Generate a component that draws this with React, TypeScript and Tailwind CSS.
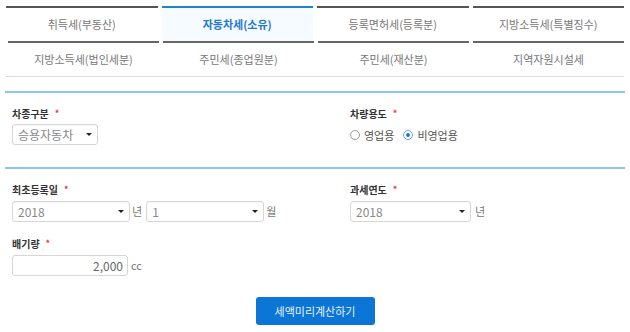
import React from "react";

const font = { fontFamily: '"Noto Sans CJK KR", "Noto Sans", sans-serif' };

const topTabs = ["취득세(부동산)", "자동차세(소유)", "등록면허세(등록분)", "지방소득세(특별징수)"];
const bottomTabs = ["지방소득세(법인세분)", "주민세(종업원분)", "주민세(재산분)", "지역자원시설세"];

const Caret = () => (
  <span className="h-0 w-0 border-x-[3px] border-t-[3px] border-x-transparent border-t-[#222]" />
);

const SelectBox = ({ value, width }: { value: string; width: string }) => (
  <div
    className={`flex h-[21px] ${width} items-center justify-between rounded-[3px] border border-[#d6d6d6] bg-white pl-[5px] pr-[5px] text-[12px] text-[#888] shadow-[inset_0_1px_1px_rgba(0,0,0,0.04)]`}
  >
    <span>{value}</span>
    <Caret />
  </div>
);

const Label = ({ children }: { children: React.ReactNode }) => (
  <div className="flex items-center gap-[6px] text-[10px] font-bold leading-[14px] text-[#333]">
    {children}
    <span className="text-[9px] text-[#e53935]">*</span>
  </div>
);

const Radio = ({ checked, label }: { checked?: boolean; label: string }) => (
  <label className="flex items-center gap-[4px] text-[11px] text-[#555]">
    <span
      className={`flex h-[10px] w-[10px] items-center justify-center rounded-full border ${checked ? "border-[#7aa6d6]" : "border-[#999]"} bg-white`}
    >
      {checked && <span className="h-[4px] w-[4px] rounded-full bg-[#1a7fe0]" />}
    </span>
    {label}
  </label>
);

export default function App() {
  return (
    <div className="h-[332px] w-[630px] bg-white" style={font}>
      <div className="px-[6px] pt-[6px]">
        <div className="grid grid-cols-4 gap-x-[4px]">
          {topTabs.map((t, i) =>
            i === 1 ? (
              <div
                key={t}
                className="flex h-[35px] items-center justify-center border-t-2 border-[#1f82d6] bg-[#f6fbff] text-[11px] font-bold text-[#1f7ad0]"
              >
                {t}
              </div>
            ) : (
              <div
                key={t}
                className="flex h-[35px] items-center justify-center border-t-2 border-[#555] text-[11px] text-[#777]"
              >
                {t}
              </div>
            )
          )}
        </div>
        <div className="grid grid-cols-4 gap-x-[4px] border-b border-[#dcdcdc] pl-[2px]">
          {bottomTabs.map((t) => (
            <div
              key={t}
              className="flex h-[35px] items-center justify-center border-t-2 border-[#666] text-[11px] text-[#777]"
            >
              {t}
            </div>
          ))}
        </div>
      </div>

      <div className="mx-[5px] mt-[14px] border-t-2 border-[#8cc4f2]">
        <div className="flex pt-[14px] pb-[22px] pl-[7px]">
          <div className="w-[338px]">
            <Label>차종구분</Label>
            <div className="mt-[3px]">
              <SelectBox value="승용자동차" width="w-[86px]" />
            </div>
          </div>
          <div>
            <Label>차량용도</Label>
            <div className="mt-[6px] flex items-center gap-[9px]">
              <Radio label="영업용" />
              <Radio checked label="비영업용" />
            </div>
          </div>
        </div>
      </div>

      <div className="mx-[5px] border-t-2 border-[#8cc4f2]">
        <div className="flex pt-[14px] pl-[7px]">
          <div className="w-[338px]">
            <Label>최초등록일</Label>
            <div className="mt-[4px] flex items-center gap-[2px] text-[11px] text-[#777]">
              <SelectBox value="2018" width="w-[118px]" />
              <span className="mr-[2px]">년</span>
              <SelectBox value="1" width="w-[118px]" />
              <span>월</span>
            </div>
            <div className="mt-[15px]">
              <Label>배기량</Label>
            </div>
            <div className="mt-[4px] flex items-center gap-[3px] text-[11px] text-[#777]">
              <div className="flex h-[21px] w-[116px] items-center justify-end rounded-[3px] border border-[#d6d6d6] pr-[4px] text-[12px] text-[#666]">
                2,000
              </div>
              <span>cc</span>
            </div>
          </div>
          <div>
            <Label>과세연도</Label>
            <div className="mt-[4px] flex items-center gap-[4px] text-[11px] text-[#777]">
              <SelectBox value="2018" width="w-[121px]" />
              <span>년</span>
            </div>
          </div>
        </div>
      </div>

      <div className="mt-[21px] flex justify-center">
        <button className="h-[28px] w-[119px] rounded-[3px] bg-[#0b76d6] text-[11px] text-[#e8f2ff]">
          세액미리계산하기
        </button>
      </div>
    </div>
  );
}
